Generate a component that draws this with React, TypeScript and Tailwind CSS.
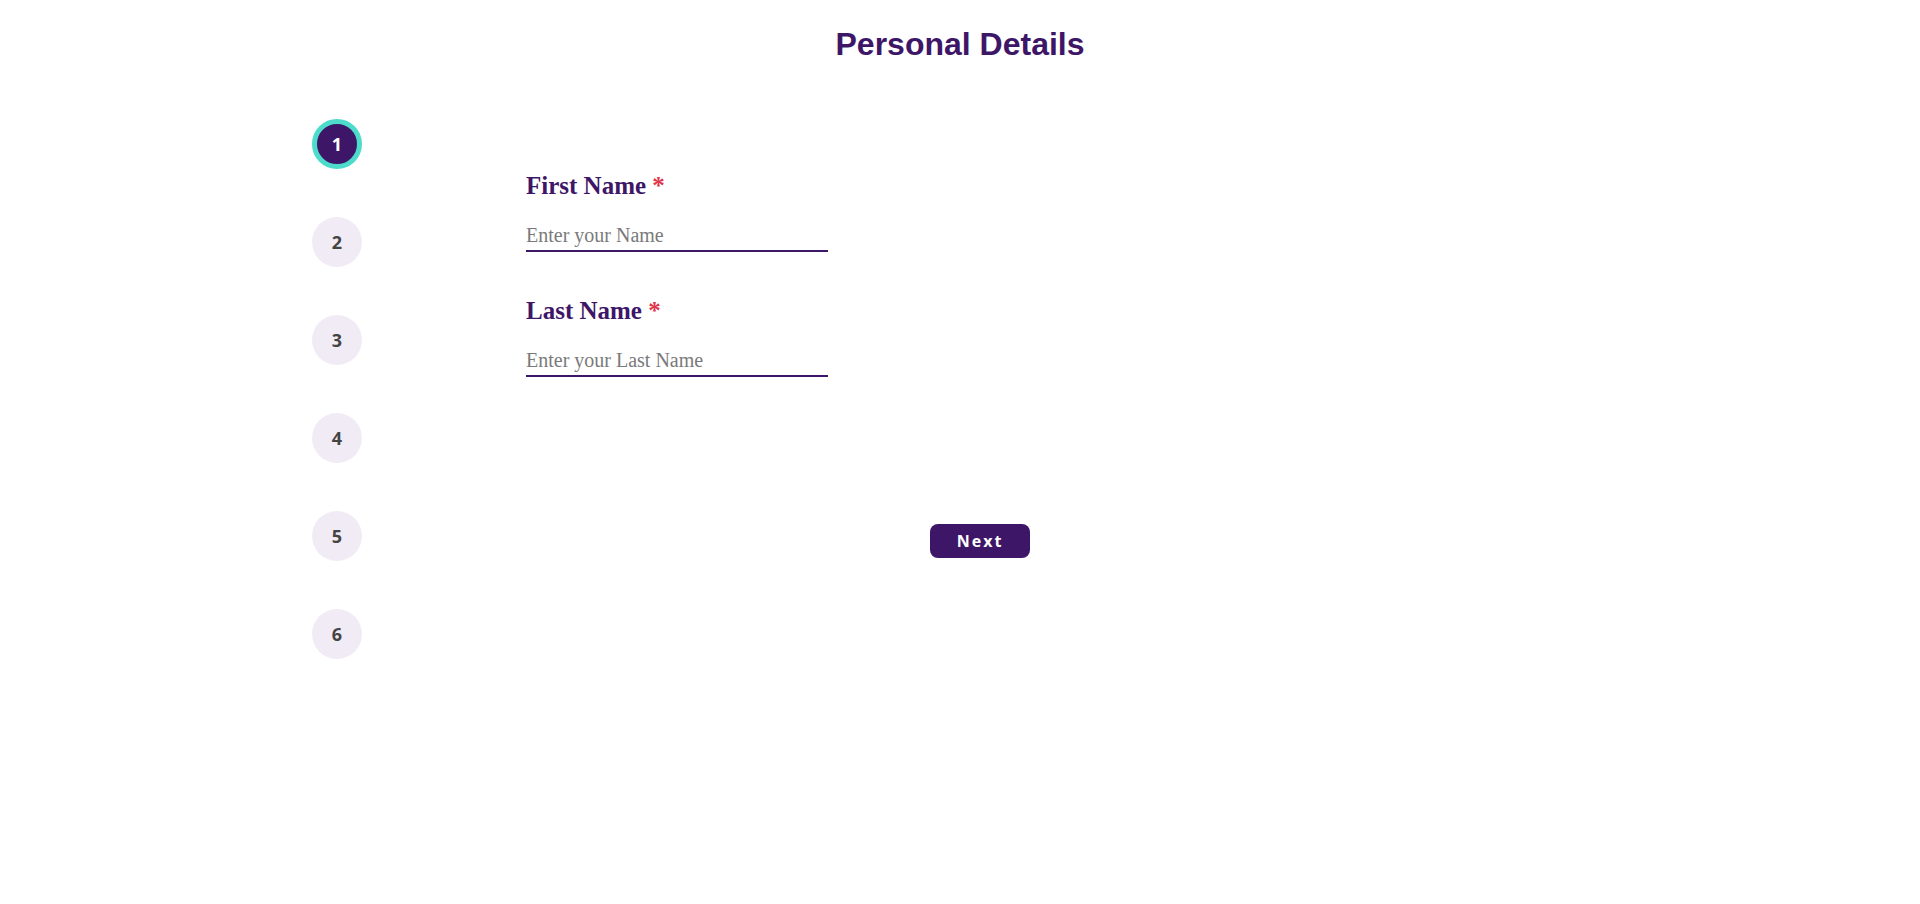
import React from "react";

const steps = [1, 2, 3, 4, 5, 6];

export default function App() {
  return (
    <div className="min-h-[904px] w-full bg-white">
      <h1
        className="pt-[25px] text-center text-[32px] leading-[38px] font-bold text-[#3e1667]"
        style={{ fontFamily: '"Liberation Sans", Arial, sans-serif' }}
      >
        Personal Details
      </h1>
      <div className="flex">
        <div className="ml-[312px] mt-[56px] flex flex-col gap-[48px]">
          {steps.map((s) => (
            <div
              key={s}
              className={
                s === 1
                  ? "flex h-[50px] w-[50px] items-center justify-center rounded-full border-[5px] border-[#4ddccb] bg-[#3e1667] text-[18px] font-bold text-white"
                  : "flex h-[50px] w-[50px] items-center justify-center rounded-full bg-[#f1ebf6] text-[18px] font-bold text-[#444444]"
              }
              style={{ fontFamily: '"Open Sans", sans-serif' }}
            >
              {s}
            </div>
          ))}
        </div>
        <div
          className="ml-[164px] mt-[108px] flex w-[908px] flex-col"
          style={{ fontFamily: '"Liberation Serif", "Times New Roman", serif' }}
        >
          <label className="text-[25px] leading-[30px] font-bold text-[#3e1667]">
            First Name <span className="text-[#e0334b]">*</span>
          </label>
          <input
            className="mt-[21px] h-[30px] w-[302px] border-b-2 border-[#3e1667] p-0 pb-[2px] text-[20px] text-[#333] placeholder:text-[#7a7a7a] outline-none"
            placeholder="Enter your Name"
          />
          <label className="mt-[44px] text-[25px] leading-[30px] font-bold text-[#3e1667]">
            Last Name <span className="text-[#e0334b]">*</span>
          </label>
          <input
            className="mt-[21px] h-[30px] w-[302px] border-b-2 border-[#3e1667] p-0 pb-[2px] text-[20px] text-[#333] placeholder:text-[#7a7a7a] outline-none"
            placeholder="Enter your Last Name"
          />
          <div className="mt-[147px] flex justify-center">
            <button
              className="h-[34px] w-[100px] rounded-[8px] bg-[#3e1667] text-[16px] font-bold tracking-[2px] text-white"
              style={{ fontFamily: '"Open Sans", sans-serif' }}
            >
              Next
            </button>
          </div>
        </div>
      </div>
    </div>
  );
}
